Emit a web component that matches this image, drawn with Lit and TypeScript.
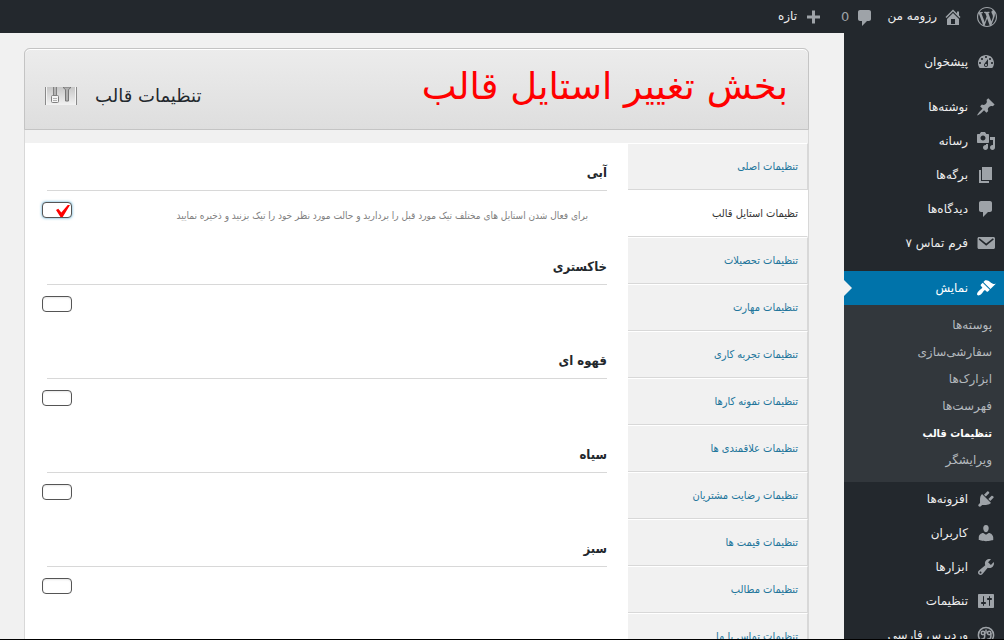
import { LitElement, html, css, svg } from "lit";
import { customElement } from "lit/decorators.js";
import { classMap } from "lit/directives/class-map.js";

const icons: Record<string, string> = {
  wordpress:
    "M20 10c0-5.51-4.49-10-10-10C4.48 0 0 4.49 0 10c0 5.52 4.48 10 10 10 5.51 0 10-4.48 10-10zM7.78 15.37L4.37 6.22c.55-.02 1.17-.08 1.17-.08.5-.06.44-1.13-.06-1.11 0 0-1.45.11-2.37.11-.18 0-.37 0-.58-.01C4.12 2.69 6.87 1.11 10 1.11c2.33 0 4.45.87 6.05 2.34-.68-.11-1.65.39-1.65 1.58 0 .74.45 1.36.9 2.1.35.61.55 1.36.55 2.46 0 1.49-1.4 5-1.4 5l-3.03-8.37c.54-.02.82-.17.82-.17.5-.05.44-1.25-.06-1.22 0 0-1.44.12-2.38.12-.87 0-2.33-.12-2.33-.12-.5-.03-.56 1.2-.06 1.22l.92.08 1.26 3.41zM17.41 10c.24-.64.74-1.87.43-4.25.7 1.29 1.05 2.71 1.05 4.25 0 3.29-1.73 6.24-4.4 7.78.97-2.59 1.94-5.2 2.92-7.78zM6.1 18.09C3.12 16.65 1.11 13.53 1.11 10c0-1.3.23-2.48.72-3.59C3.25 10.3 4.67 14.2 6.1 18.09zm4.03-6.63l2.58 6.98c-.86.29-1.76.45-2.71.45-.79 0-1.57-.11-2.29-.33.81-2.38 1.62-4.74 2.42-7.1z",
  home: "M16 8.5l1.53 1.53-1.06 1.06L10 4.6l-6.47 6.49-1.06-1.06L10 2.5l4 4v-2h2v4zm-6-2.46l6 5.99V18H4v-5.97zM12 17v-5H8v5h4z",
  comments:
    "M5 2h9c1.1 0 2 .9 2 2v7c0 1.1-.9 2-2 2h-2l-5 5v-5H5c-1.1 0-2-.9-2-2V4c0-1.1.9-2 2-2z",
  plus: "M17 8.500v3h-5v5H9v-5H4v-3h5v-5h3v5h5z",
  dashboard:
    "M3.76 16h12.48c1.1-1.37 1.76-3.11 1.76-5 0-4.42-3.58-8-8-8s-8 3.58-8 8c0 1.89.66 3.63 1.76 5zM10 4c.55 0 1 .45 1 1s-.45 1-1 1-1-.45-1-1 .45-1 1-1zM6 6c.55 0 1 .45 1 1s-.45 1-1 1-1-.45-1-1 .45-1 1-1zm8 0c.55 0 1 .45 1 1s-.45 1-1 1-1-.45-1-1 .45-1 1-1zm-5.37 5.55L12 7v6c0 1.1-.9 2-2 2s-2-.9-2-2c0-.57.24-1.08.63-1.45zM4 10c.55 0 1 .45 1 1s-.45 1-1 1-1-.45-1-1 .45-1 1-1zm12 0c.55 0 1 .45 1 1s-.45 1-1 1-1-.45-1-1 .45-1 1-1zm-5 3c0-.55-.45-1-1-1s-1 .45-1 1 .45 1 1 1 1-.45 1-1z",
  post: "M10.44 3.02l1.82-1.82 6.36 6.35-1.83 1.82c-1.05-.68-2.48-.57-3.41.36l-.75.75c-.92.93-1.04 2.35-.35 3.41l-1.83 1.82-2.41-2.41-2.8 2.79c-.42.42-3.38 2.71-3.8 2.29s1.86-3.39 2.28-3.81l2.79-2.79L4.1 9.36l1.83-1.82c1.05.69 2.48.57 3.4-.36l.75-.75c.93-.92 1.05-2.35.36-3.41z",
  media:
    "M13 11V4c0-.55-.45-1-1-1h-1.67L9 1H5L3.67 3H2c-.55 0-1 .45-1 1v7c0 .55.45 1 1 1h10c.55 0 1-.45 1-1zM7 4.5c1.38 0 2.5 1.12 2.5 2.5S8.38 9.5 7 9.5 4.5 8.38 4.5 7 5.62 4.5 7 4.5zM14 6h5v10.5c0 1.38-1.12 2.5-2.5 2.5S14 17.88 14 16.5s1.12-2.5 2.5-2.5c.17 0 .34.02.5.05V9h-3V6zm-4 8.05V13h2v3.5c0 1.38-1.12 2.5-2.5 2.5S7 17.88 7 16.5 8.12 14 9.5 14c.17 0 .34.02.5.05z",
  page: "M6 15V2h10v13H6zm-1 1h8v2H3V5h2v11z",
  email:
    "M3 4h14.500c.8 0 1.500.7 1.500 1.500v9c0 .8-.7 1.500-1.500 1.500H3c-.8 0-1.500-.7-1.500-1.500v-9C1.500 4.700 2.200 4 3 4zm.6 1.300l-.9 1.200 7.500 6.200 7.600-6.200-.9-1.200-6.700 5.300z",
  appearance:
    "M14.48 11.06L7.41 3.99l1.5-1.5c.5-.56 2.3-.47 3.51.32 1.21.8 1.43 1.28 2.91 2.1 1.18.64 2.45 1.26 4.45.85zm-.71.71L6.7 4.7 4.93 6.47c-.39.39-.39 1.02 0 1.41l1.06 1.06c.39.39.39 1.03 0 1.42-.6.6-1.43 1.11-2.21 1.69-.35.26-.7.53-1.01.84C1.43 14.23.4 16.08 1.4 17.07c.99 1 2.84-.03 4.18-1.36.31-.31.58-.66.85-1.02.57-.78 1.08-1.61 1.69-2.21.39-.39 1.02-.39 1.41 0l1.06 1.06c.39.39 1.02.39 1.41 0z",
  plugins:
    "M13.11 4.36L9.87 7.6 8 5.73l3.24-3.24c.35-.34 1.05-.2 1.56.32.52.51.66 1.21.31 1.55zm-8 1.77l.91-1.12 9.01 9.01-1.19.84c-.71.71-2.63 1.16-3.82 1.16H6.14L4.9 17.26c-.59.59-1.54.59-2.12 0-.59-.58-.59-1.53 0-2.12l1.24-1.24v-3.88c0-1.13.4-3.19 1.09-3.89zm7.26 3.97l3.24-3.24c.34-.35 1.04-.21 1.55.31.52.51.66 1.21.31 1.55l-3.24 3.25z",
  users:
    "M10 9.25c-2.27 0-2.73-3.44-2.73-3.44C7 4.02 7.82 2 9.97 2c2.16 0 2.98 2.02 2.71 3.81 0 0-.41 3.44-2.68 3.44zm0 2.57L12.72 10c2.39 0 4.52 2.33 4.52 4.53v2.49s-3.65 1.13-7.24 1.13c-3.65 0-7.24-1.13-7.24-1.13v-2.49c0-2.25 1.94-4.48 4.47-4.48z",
  tools:
    "M16.68 9.77c-1.34 1.34-3.3 1.67-4.95.99l-5.41 6.52c-.99.99-2.59.99-3.58 0s-.99-2.59 0-3.57l6.52-5.42c-.68-1.65-.35-3.61.99-4.95 1.28-1.28 3.12-1.62 4.72-1.06l-2.89 2.89 2.82 2.82 2.86-2.87c.53 1.58.18 3.39-1.08 4.65zM3.81 16.21c.4.39 1.04.39 1.43 0 .4-.4.4-1.04 0-1.43-.39-.4-1.03-.4-1.43 0-.39.39-.39 1.03 0 1.43z",
  settings:
    "M18 16V4c0-.55-.45-1-1-1H3c-.55 0-1 .45-1 1v12c0 .55.45 1 1 1h14c.55 0 1-.45 1-1zM8 11h1c.55 0 1 .45 1 1s-.45 1-1 1H8v1.5c0 .28-.22.5-.5.5s-.5-.22-.5-.5V13H6c-.55 0-1-.45-1-1s.45-1 1-1h1V5.5c0-.28.22-.5.5-.5s.5.22.5.5V11zm5-2h-1c-.55 0-1-.45-1-1s.45-1 1-1h1V5.5c0-.28.22-.5.5-.5s.5.22.5.5V7h1c.55 0 1 .45 1 1s-.45 1-1 1h-1v5.5c0 .28-.22.5-.5.5s-.5-.22-.5-.5V9z",
};

const persianEmblem = svg`
  <g fill="none" stroke="currentColor" stroke-width="1.500">
    <circle cx="10" cy="10" r="7.600" />
    <circle cx="7" cy="8" r="1.700" />
    <circle cx="13.200" cy="8" r="1.700" />
    <path d="M8.700 8v3.200c0 2-1.600 3-3.600 3M14.900 8v3.200c0 2-1.600 3-3.800 3M10 4.500v4" />
  </g>`;

const icon = (name: string) => html`
  <svg class="icon" viewBox="0 0 20 20" aria-hidden="true">
    ${name === "persian" ? persianEmblem : svg`<path fill="currentColor" d=${icons[name]} />`}
  </svg>`;

interface MenuEntry {
  icon: string;
  label: string;
  current?: boolean;
}

const menu: MenuEntry[][] = [
  [{ icon: "dashboard", label: "پیشخوان" }],
  [
    { icon: "post", label: "نوشته‌ها" },
    { icon: "media", label: "رسانه" },
    { icon: "page", label: "برگه‌ها" },
    { icon: "comments", label: "دیدگاه‌ها" },
    { icon: "email", label: "فرم تماس ۷" },
  ],
  [
    { icon: "appearance", label: "نمایش", current: true },
    { icon: "plugins", label: "افزونه‌ها" },
    { icon: "users", label: "کاربران" },
    { icon: "tools", label: "ابزارها" },
    { icon: "settings", label: "تنظیمات" },
    { icon: "persian", label: "وردپرس فارسی" },
  ],
];

const submenu = ["پوسته‌ها", "سفارشی‌سازی", "ابزارک‌ها", "فهرست‌ها", "تنظیمات قالب", "ویرایشگر"];

const tabs = [
  "تنظیمات اصلی",
  "تظیمات استایل قالب",
  "تنظیمات تحصیلات",
  "تنظیمات مهارت",
  "تنظیمات تجربه کاری",
  "تنظیمات نمونه کارها",
  "تنظیمات علاقمندی ها",
  "تنظیمات رضایت مشتریان",
  "تنظیمات قیمت ها",
  "تنظیمات مطالب",
  "تنظیمات تماس با ما",
];

const styleOptions = [
  {
    name: "آبی",
    checked: true,
    hint: "برای فعال شدن استایل های مختلف تیک مورد قبل را بردارید و حالت مورد نظر خود را تیک بزنید و ذخیره نمایید",
  },
  { name: "خاکستری" },
  { name: "قهوه ای" },
  { name: "سیاه" },
  { name: "سبز" },
  { name: "قرمز" },
];

@customElement("admin-bar")
class AdminBar extends LitElement {
  static styles = css`
    :host {
      display: block;
      background: #23282d;
      color: #eee;
      font-size: 12px;
      line-height: 33px;
    }
    .bar {
      display: flex;
      align-items: center;
      height: 33px;
      padding-right: 7px;
    }
    a {
      display: flex;
      align-items: center;
      gap: 6px;
      color: inherit;
      text-decoration: none;
    }
    .logo { margin-left: 14px; }
    .site { margin-left: 12px; }
    .count { margin-left: 18px; color: #9ea3a8; font-size: 13px; }
    .icon { width: 20px; height: 20px; color: #9ea3a8; }
    .count .icon { margin-top: 2px; }
  `;
  render() {
    return html`<nav class="bar" aria-label="نوار ابزار">
      <a class="logo" href="#" aria-label="WordPress">${icon("wordpress")}</a>
      <a class="site" href="#">${icon("home")}رزومه من</a>
      <a class="count" href="#">${icon("comments")}0</a>
      <a href="#">${icon("plus")}تازه</a>
    </nav>`;
  }
}

@customElement("side-menu")
class SideMenu extends LitElement {
  static styles = css`
    :host {
      display: block;
      background: #23282d;
      font-size: 12px;
    }
    ul { list-style: none; margin: 0; padding: 0; }
    .groups { display: flex; flex-direction: column; gap: 11px; padding-top: 12px; }
    a { text-decoration: none; }
    .item {
      display: flex;
      align-items: center;
      gap: 8px;
      height: 34px;
      padding-right: 8px;
      color: #eee;
    }
    .icon { width: 20px; height: 20px; color: #9ea3a8; }
    .current { position: relative; background: #0073aa; color: #fff; }
    .current .icon { color: #fff; }
    .current::after {
      content: "";
      position: absolute;
      left: 0;
      top: 9px;
      border: 8px solid transparent;
      border-left-color: #f1f1f1;
      border-right-width: 0;
    }
    .submenu { background: #32373c; padding: 7px 0 8px; }
    .sub {
      display: block;
      padding-right: 12px;
      line-height: 27px;
      color: #b4b9be;
    }
    .chosen { color: #fff; font-family: "DejaVu Sans Condensed", "DejaVu Sans", sans-serif; font-weight: bold; font-size: 11px; }
  `;
  render() {
    return html`<nav class="groups" aria-label="پیشخوان">
      ${menu.map(
        (group) => html`<ul>
          ${group.map(
            (m) => html`<li>
              <a class=${classMap({ item: true, current: !!m.current })} href="#">${icon(m.icon)}${m.label}</a>
              ${m.current
                ? html`<ul class="submenu">
                    ${submenu.map(
                      (s, i) => html`<li><a class=${classMap({ sub: true, chosen: i === 4 })} href="#">${s}</a></li>`
                    )}
                  </ul>`
                : null}
            </li>`
          )}
        </ul>`
      )}
    </nav>`;
  }
}

@customElement("theme-options")
class ThemeOptions extends LitElement {
  static styles = css`
    :host { display: block; }
    .panel {
      border: 1px solid #d8d8d8;
      border-top: 0;
      border-radius: 6px 6px 0 0;
    }
    .header {
      display: flex;
      align-items: center;
      justify-content: space-between;
      box-sizing: border-box;
      height: 82px;
      margin: 0 -1px 13px;
      padding: 0 20px;
      border: 1px solid #c4c4c4;
      border-radius: 6px 6px 0 0;
      background: linear-gradient(#ececec, #dedede);
      box-shadow: inset 0 1px 0 #fff;
    }
    .title { margin: 0; padding-bottom: 4px; color: #f00; font-size: 37px; line-height: 72px; font-weight: normal; }
    .brand { display: flex; align-items: center; gap: 18px; padding-top: 13px; }
    .name { margin: 0; color: #23282d; font-size: 18px; line-height: 28px; font-weight: normal; }
    .badge { width: 32px; height: 18px; }
    .body {
      display: grid;
      grid-template-columns: 180px 1fr;
      background: #fff;
      font-family: "DejaVu Sans Condensed", "DejaVu Sans", sans-serif;
    }
    .tab {
      display: block;
      box-sizing: border-box;
      height: 47px;
      padding-right: 9px;
      border: solid #d8d8d8;
      border-width: 1px 1px 1px 0;
      border-top-color: #fff;
      background: #f1f1f1;
      color: #21759b;
      font-size: 11px;
      line-height: 45px;
      text-decoration: none;
    }
    .active { background: #fff; border-right-color: #fff; color: #333; }
    .options { padding: 0 21px 0 17px; }
    .option { height: 94px; }
    .option-name {
      display: block;
      box-sizing: border-box;
      height: 48px;
      margin-left: 5px;
      padding-top: 17px;
      border-bottom: 1px solid #d8d8d8;
      color: #23282d;
      font-size: 13px;
      line-height: 26px;
      font-weight: bold;
    }
    .row { display: flex; justify-content: space-between; align-items: flex-start; padding-top: 11px; }
    .hint { margin: 0; padding-right: 19px; color: #808080; font-size: 10px; line-height: 28px; }
    .box {
      appearance: none;
      display: grid;
      justify-content: start;
      direction: rtl;
      flex: none;
      box-sizing: border-box;
      width: 30px;
      height: 16px;
      margin: 0 auto 0 0;
      padding-right: 1px;
      border: 1px solid #555;
      border-radius: 4px;
      background: #fff;
      box-shadow: inset 0 1px 2px rgba(0, 0, 0, 0.1);
    }
    .box:checked { box-shadow: 0 0 3px rgba(30, 140, 190, 0.8); }
    .box:checked::before {
      content: "";
      width: 14px;
      height: 12px;
      margin-top: 2px;
      background: #f00;
      clip-path: polygon(0 42%, 16% 32%, 38% 62%, 84% 0, 100% 0, 48% 100%, 32% 100%);
    }
  `;
  render() {
    return html`<section class="panel">
      <header class="header">
        <h1 class="title">بخش تغییر استایل قالب</h1>
        <div class="brand">
          <h2 class="name">تنظیمات قالب</h2>
          <svg class="badge" viewBox="0 0 32 18" aria-hidden="true">
            <defs>
              <linearGradient id="plate" x1="0" y1="0" x2="0" y2="1">
                <stop offset="0" stop-color="#c6c6c6" />
                <stop offset="1" stop-color="#f2f2f2" />
              </linearGradient>
            </defs>
            <rect width="32" height="18" fill="#f4f4f4" />
            <rect x="2" width="28" height="18" fill="url(#plate)" />
            <path d="M.500 0v18M31.500 0v18" stroke="#8a8a8a" />
            <path d="M8.500 0v9h3V0" fill="#b4b4b4" stroke="#808080" />
            <rect x="6.500" y="8.500" width="7" height="7" rx="1" fill="#f4f4f4" stroke="#808080" />
            <path d="M8 11.500h4M8 13.500h4" stroke="#b0b0b0" />
            <path d="M18.500 0v1l2 1.500v11.500h3V2.500l2-1.500V0z" fill="#b0b0b0" stroke="#777" />
          </svg>
        </div>
      </header>
      <div class="body">
        <nav class="tabs" aria-label="تنظیمات">
          ${tabs.map((t, i) => html`<a class=${classMap({ tab: true, active: i === 1 })} href="#">${t}</a>`)}
        </nav>
        <form class="options">
          ${styleOptions.map(
            (o, i) => html`<div class="option">
              <label class="option-name" for="style-${i}">${o.name}</label>
              <div class="row">
                ${o.hint ? html`<p class="hint">${o.hint}</p>` : null}
                <input class="box" id="style-${i}" type="checkbox" .checked=${!!o.checked} />
              </div>
            </div>`
          )}
        </form>
      </div>
    </section>`;
  }
}

@customElement("app-root")
class AppRoot extends LitElement {
  static styles = css`
    :host {
      display: flex;
      flex-direction: column;
      box-sizing: border-box;
      height: 100vh;
      overflow: hidden;
      border-bottom: 1px solid #000;
      background: #f1f1f1;
      direction: rtl;
      font-family: "DejaVu Sans", sans-serif;
    }
    .page {
      flex: 1;
      min-height: 0;
      display: grid;
      grid-template-columns: 160px minmax(0, 1fr);
      overflow: hidden;
    }
    .main { padding: 15px 35px 0 24px; }
  `;
  render() {
    return html`<admin-bar></admin-bar>
      <div class="page">
        <side-menu></side-menu>
        <main class="main"><theme-options></theme-options></main>
      </div>`;
  }
}
